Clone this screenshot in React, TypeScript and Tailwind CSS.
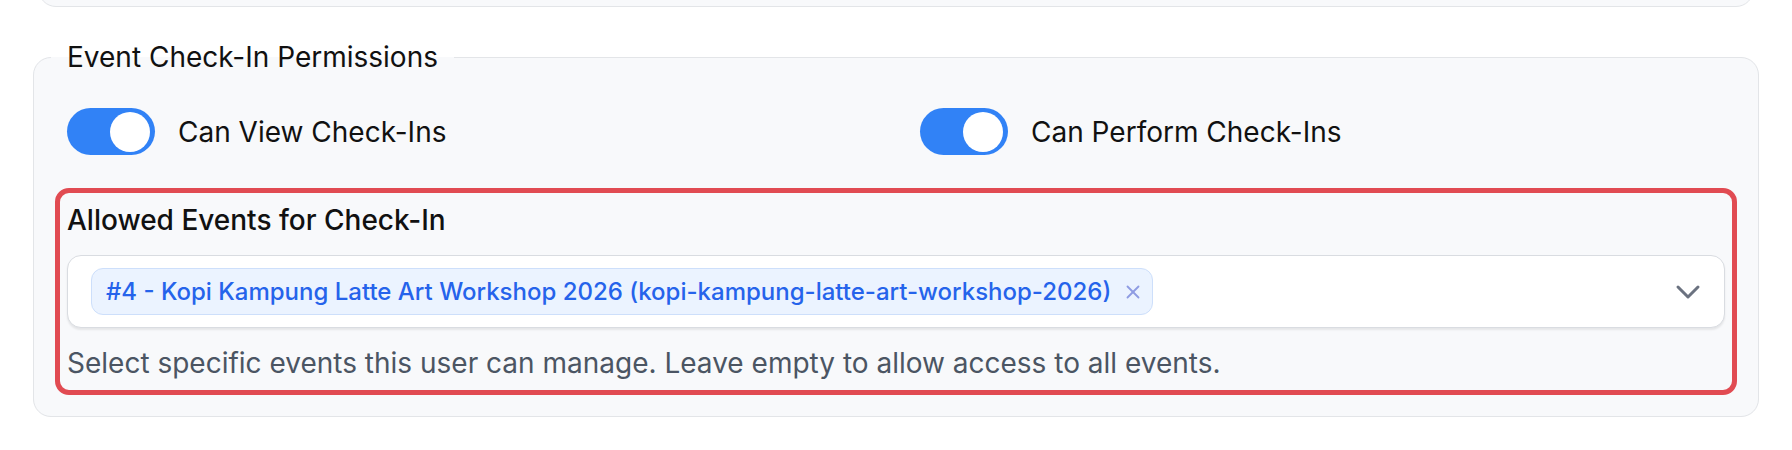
import { ChevronDown, X } from "lucide-react";

function Toggle({ label }: { label: string }) {
  return (
    <div className="flex items-center gap-[23px]">
      <span className="flex h-[47px] w-[88px] shrink-0 items-center justify-end rounded-full bg-[#3182f6] pr-[5px]">
        <span className="h-[40px] w-[40px] rounded-full bg-white" />
      </span>
      <span className="text-[28px] leading-[34px] text-[#111111]">{label}</span>
    </div>
  );
}

export default function App() {
  return (
    <div className="min-h-[450px] overflow-hidden bg-white font-['Inter',sans-serif]">
      {/* tail of the card above */}
      <div className="mx-[38px] -mt-[30px] h-[37px] rounded-b-[18px] border border-[#e3e5e8] bg-[#f8f9fb]" />

      <fieldset className="mx-[33px] mt-[33px] rounded-[18px] border border-[#e3e5e8] bg-[#f8f9fb] px-[17px] pb-[21px]">
        <legend className="px-[16px] text-[28px] leading-[34px] text-[#111111]">
          Event Check-In Permissions
        </legend>

        <div className="px-[16px] pt-[34px]">
          <div className="grid grid-cols-2 gap-x-12">
            <Toggle label="Can View Check-Ins" />
            <Toggle label="Can Perform Check-Ins" />
          </div>

          <div className="-mx-[12px] mt-[33px] rounded-[14px] border-[5px] border-[#e14b52] px-[7px] pb-[10px] pt-[10px]">
            <div className="text-[28px] font-medium leading-[34px] text-[#111111]">
              Allowed Events for Check-In
            </div>

            <div className="mt-[18px] flex h-[73px] items-center rounded-[14px] border border-[#d9dce1] bg-white pl-[23px] pr-[16px] shadow-[0_2px_2px_rgba(0,0,0,0.08)]">
              <span className="flex h-[47px] items-center gap-[11px] rounded-[12px] border border-[#cddffb] bg-[#ebf3ff] pl-[14px] pr-[8px] text-[24px] font-medium text-[#2563eb]">
                #4 - Kopi Kampung Latte Art Workshop 2026 (kopi-kampung-latte-art-workshop-2026)
                <X size={22} strokeWidth={2} className="text-[#8e9ce3]" />
              </span>
              <ChevronDown size={40} strokeWidth={1.8} className="ml-auto text-[#6b7280]" />
            </div>

            <p className="mt-[18px] text-[28px] leading-[34px] text-[#4b5563]">
              Select specific events this user can manage. Leave empty to allow access to all events.
            </p>
          </div>
        </div>
      </fieldset>
    </div>
  );
}
